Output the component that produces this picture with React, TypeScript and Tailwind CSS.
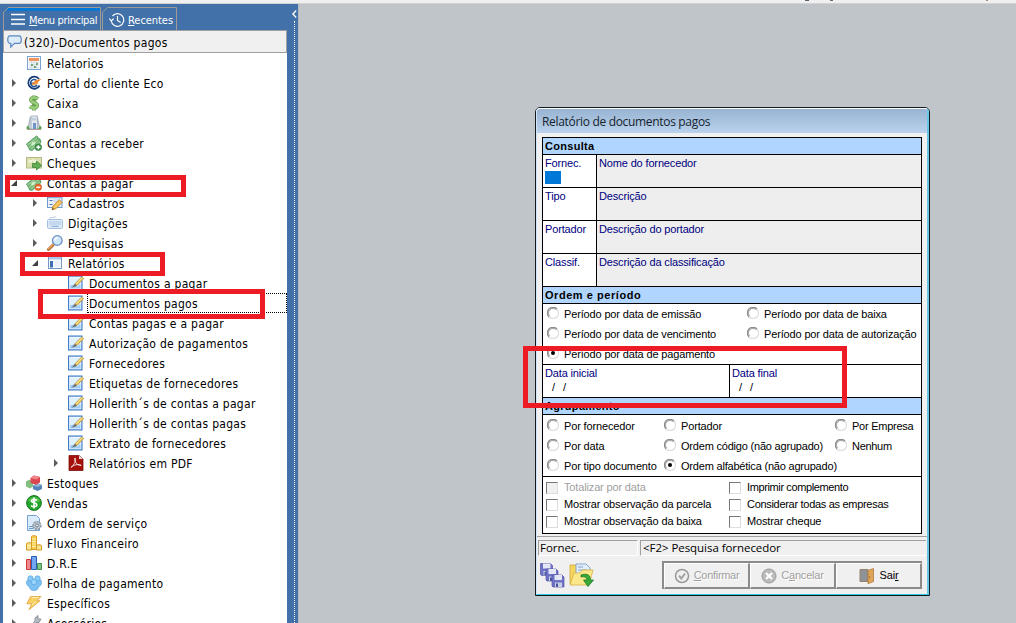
import type { ReactNode } from 'react';

const treeFont = "font-['DejaVu_Sans_Condensed','DejaVu_Sans',sans-serif] [font-stretch:condensed]";
const formFont = "font-['Liberation_Sans',sans-serif]";
const uiFont = "font-['Open_Sans',sans-serif]";

function Svg({ children, className = 'h-4 w-4' }: { children: ReactNode; className?: string }) {
  return (
    <svg viewBox="0 0 16 16" className={`shrink-0 ${className}`} fill="none">
      {children}
    </svg>
  );
}

const banknote = (
  <>
    <path d="M.5 9 10.5 1l1.5 1.2-.5 1.3L14 4l1 3.5L6 15.5l-2.5-.7-.8-2.2z" fill="#79b978" stroke="#3f8d4b" strokeWidth=".8" />
    <path d="M1.5 9.8 11 3M3 12.3l9-7M5 14l9-7" stroke="#b8e0b2" strokeWidth=".8" />
    <ellipse cx="7.3" cy="8.5" rx="2.4" ry="1.6" transform="rotate(-38 7.3 8.5)" fill="#d1edcb" />
  </>
);

const icons: Record<string, ReactNode> = {
  calendar: (
    <Svg>
      <rect x="1.5" y="1.5" width="13" height="13" fill="#f4f8fd" stroke="#7ba3cf" />
      <rect x="3" y="3" width="10" height="3" fill="#f0925c" />
      <path d="M3 7.5h10M3 10h10M3 12.5h10M5.5 6v8M8 6v8M10.5 6v8" stroke="#d3dbe3" />
      <path d="M5 9h2v2H5zM10 8h2v2h-2zM8 11h2v2H8z" fill="#6faa72" />
    </Svg>
  ),
  eco: (
    <Svg>
      <path d="M13 4A6 6 0 1 0 13.600 10.500" stroke="#173d78" strokeWidth="1.800" />
      <path d="M10.500 5.500A3.500 3.500 0 1 0 11 10M4.500 8.300h4" stroke="#245496" strokeWidth="1.500" />
      <path d="M5.500 9.300 9.500 5.500l6-1.800-3.800 3.800z" fill="#f4872a" />
      <path d="m6 9 4 .2 2-1.800" stroke="#f4872a" strokeWidth="1.300" />
    </Svg>
  ),
  cash: (
    <Svg>
      <path d="M12 3.8C9.5 2.2 5 2 5 5c0 3 6.2 2 6.2 5.3 0 3.2-5 3-7.4 1.2M8 .500v15" stroke="#6a9f52" strokeWidth="3.800" />
      <path d="M12 3.8C9.5 2.2 5 2 5 5c0 3 6.2 2 6.2 5.3 0 3.2-5 3-7.4 1.2M8 1v2M8 12v3" stroke="#98cd7a" strokeWidth="2.400" />
    </Svg>
  ),
  bank: (
    <Svg>
      <path d="M2 14 4 2.500h7.500L14 14z" fill="#cfd8e2" stroke="#96a2ae" strokeWidth=".8" />
      <rect x="5" y="1" width="6.500" height="13" fill="#e4e9ef" stroke="#a0a9b5" strokeWidth=".8" />
      <path d="M6 3h4.500v2.500H6z" fill="#c3cfde" />
      <path d="M7 8h3v6H7z" fill="#6e96c8" />
      <path d="M1 14.500h14" stroke="#b59c94" />
      <path d="M.500 14v-2L2 10.500 4 14M12 14l2-3.500 1.500 1.500v2" fill="#5da152" />
    </Svg>
  ),
  receive: (
    <Svg>
      {banknote}
      <circle cx="12.3" cy="12.3" r="3.3" fill="#3d9446" stroke="#2a7335" strokeWidth=".6" />
      <path d="M12.3 10.3v4M10.3 12.3h4" stroke="#fff" strokeWidth="1.4" />
    </Svg>
  ),
  pay: (
    <Svg>
      {banknote}
      <circle cx="12.3" cy="12.3" r="3.3" fill="#ee6a2c" stroke="#c94a16" strokeWidth=".6" />
      <path d="M10.3 12.3h4" stroke="#fff" strokeWidth="1.5" />
    </Svg>
  ),
  cheque: (
    <Svg>
      <rect x=".5" y="2.5" width="15" height="10.5" fill="#dcdfae" stroke="#b3b884" />
      <path d="M3 7.500c0-3 2-3 2 0 1-4 3-3 3-1s2-2 3-1" stroke="#fbfce8" strokeWidth="1.200" />
      <path d="M6.5 8.500h4V6L15.500 10.500l-5 4.500v-2.500h-4z" fill="#63ae52" stroke="#3f8439" strokeWidth=".8" />
    </Svg>
  ),
  form: (
    <Svg>
      <rect x=".5" y="1.5" width="14.5" height="11" fill="#e9f2fc" stroke="#6d99cd" />
      <path d="M1 2.5h14" stroke="#87b0df" strokeWidth="1.500" />
      <path d="M2.500 5.500h3M2.500 9.500h3" stroke="#4774ab" />
      <path d="M7 5h6v1.500H7z" fill="#fff" stroke="#9ab8d8" strokeWidth=".6" />
      <path d="m5 14.800 1-3.800 6.200-6.300 3 2.700-6.300 6.400z" fill="#f6c45b" stroke="#bd7c27" strokeWidth=".8" />
      <path d="m5 14.800.6-2 1.700 1.300z" fill="#674a2b" />
    </Svg>
  ),
  keyboard: (
    <Svg>
      <path d="M3 4V2.500h5V1" stroke="#c3cfdc" />
      <rect x=".5" y="4.500" width="15" height="9" rx="1" fill="#dbe9f8" stroke="#a5c0df" />
      <path d="M2.500 7h11M2.500 9h11" stroke="#84a6cf" strokeDasharray="1 1" />
      <path d="M4.500 11.300h7" stroke="#84a6cf" />
    </Svg>
  ),
  search: (
    <Svg>
      <path d="m1.500 14.500 5-5" stroke="#ad652e" strokeWidth="3" strokeLinecap="round" />
      <path d="m1.500 14 5-5" stroke="#ecaa65" strokeWidth="1.300" strokeLinecap="round" />
      <circle cx="10.300" cy="5.500" r="4.800" fill="#cfe6fb" stroke="#6a8fc3" strokeWidth="1.300" />
      <path d="M7.500 5.500a3 3 0 0 1 3-2.700" stroke="#fff" strokeWidth="1.500" />
    </Svg>
  ),
  report: (
    <Svg>
      <rect x="1.500" y="1.500" width="13" height="12" fill="#f6faff" stroke="#7897c2" />
      <path d="M2 2h12v2.500H2z" fill="#a9c9ee" />
      <path d="M3 6h3v6.500H3z" fill="#3d70b7" />
      <path d="M7.500 6h5.500v6H7.500z" fill="#eaf1fa" />
    </Svg>
  ),
  edit: (
    <Svg>
      <rect x=".6" y="1.100" width="13.300" height="13.800" fill="#fff" stroke="#3d7dcc" strokeWidth="1.200" />
      <path d="M2 2.500h10.500v11H2z" fill="#dff0fe" />
      <path d="M2 13.500v-3l3-1 4 2 3.500-2.500v4.500z" fill="#9fcdf4" />
      <path d="m5.500 11.800 2-3.800 6.500-6.200 1.800 1.700-6.300 6.500z" fill="#eac45b" stroke="#a98432" strokeWidth=".6" />
      <path d="m3.500 12.800 3.500-4 2 2z" fill="#697078" />
      <path d="m8 9 6.500-6.300" stroke="#fff0a9" strokeWidth=".8" />
    </Svg>
  ),
  pdf: (
    <Svg>
      <path d="M1 .5h10L15 4v11.500H1z" fill="#a4120b" stroke="#7b100c" strokeWidth=".8" />
      <path d="M11 .5V4h4z" fill="#e8dedc" />
      <path d="M3 12.500c2-1 5-6 4.500-9-.5-1.500-1.500 0-.5 2.500 1 3 4 4.800 6 4.500 1-.6-3-1.500-5-.7-1.500.3-3.600 1-5 2.700z" stroke="#fff" strokeWidth=".8" />
    </Svg>
  ),
  stock: (
    <Svg>
      <path d="m0 6.500 3-1.800 4 1.800v5L4 13.500l-4-2z" fill="#83bd80" />
      <path d="m7 10.500 4.500-2.300L16 10v4l-4.500 2L7 14z" fill="#5684ba" />
      <path d="m7 10.500 4.500 1.500L16 10l-4.500-1.800z" fill="#92b5dc" />
      <path d="M4.500 3 8 .5 14 2v5.500L10 9.800 4.500 8z" fill="#dc464e" />
      <path d="M4.500 3 8 .5 14 2l-3.700 2.500z" fill="#f0878a" />
    </Svg>
  ),
  sales: (
    <Svg>
      <circle cx="8" cy="8" r="7.400" fill="#25a52d" stroke="#15781c" />
      <path d="M2 6a6.500 6.500 0 0 1 12 0c-4 2-8 2-12 0z" fill="#66cc5a" opacity=".7" />
      <path d="M10.800 5.500C8.500 3.800 5.500 4.300 5.500 6c0 2.300 5.300 1.300 5.300 4 0 2-3.500 2.300-5.800.7M8 2.500v11" stroke="#fff" strokeWidth="1.600" />
    </Svg>
  ),
  service: (
    <Svg>
      <path d="M1.500.5h9l3 3v12h-12z" fill="#dcecfc" stroke="#74a0d2" />
      <path d="M3 11.500h4M3 13.500h4" stroke="#6999ce" />
      <circle cx="11" cy="10.500" r="3.900" fill="#bac4ce" stroke="#8d98a3" strokeWidth="1.500" strokeDasharray="2 .9" />
      <circle cx="11" cy="10.500" r="1.400" fill="#eff4f8" stroke="#76828f" />
    </Svg>
  ),
  flow: (
    <Svg>
      <path d="M5.500 1.500c0-1 5-1 5 0v13h-5z" fill="#f8cd54" stroke="#d39b22" />
      <path d="M.5 8.500c0-1 5-1 5 0V15h-5zM10.500 10.500c0-1 5-1 5 0V15h-5z" fill="#fadd83" stroke="#d39b22" />
      <path d="M6 4h4M6 6.500h4M6 9h4M6 11.500h4M1 10.500h4M1 12.700h4M11 12.700h4" stroke="#fff0ac" />
    </Svg>
  ),
  bars: (
    <Svg>
      <path d="M.5 4.500h4v10h-4z" fill="#f08a8a" stroke="#cc3838" />
      <path d="M5.500 1.500h5v13h-5z" fill="#75a5ef" stroke="#285fb8" />
      <path d="M11.500 8.500h4v6h-4z" fill="#80c886" stroke="#438e4c" />
    </Svg>
  ),
  people: (
    <Svg>
      <path d="M.500 7c0-2 2-2.500 3-2.500h9c1.500 0 3 .5 3 2.500 0 3-1.500 4.500-3 4.500 0 3-2 4-4.500 4s-4.500-1-4.500-4C2 11.500.500 10 .500 7z" fill="#7dc1f3" stroke="#58a5e0" strokeWidth=".7" />
      <circle cx="4.500" cy="3.500" r="2.700" fill="#8acbf7" stroke="#58a5e0" strokeWidth=".7" />
      <circle cx="11.500" cy="3.500" r="2.700" fill="#8acbf7" stroke="#58a5e0" strokeWidth=".7" />
      <circle cx="8" cy="7" r="2.800" fill="#98d4fb" stroke="#58a5e0" strokeWidth=".7" />
    </Svg>
  ),
  bolt: (
    <Svg>
      <path d="M4.500 1.500h10.500l-4 4.300h3L3 14.800l2.700-6H.8z" fill="#f8cf62" stroke="#dda23a" strokeWidth=".8" />
      <path d="M5.500 2.500h7M6 10l4-3.500" stroke="#fff0b7" />
    </Svg>
  ),
  tools: (
    <Svg>
      <path d="m2 14 7-8V3l3-2.500V4h3l-2 3.500h-3L4.500 15.500z" fill="#b7bec6" stroke="#7a838e" strokeWidth=".8" />
      <path d="M3 11v4" stroke="#86a8d8" strokeWidth="3" />
    </Svg>
  ),
};

type Item = { label: string; icon: string; level: 0 | 1 | 2; state?: 'closed' | 'open'; focused?: boolean };

const items: Item[] = [
  { label: 'Relatorios', icon: 'calendar', level: 0 },
  { label: 'Portal do cliente Eco', icon: 'eco', level: 0, state: 'closed' },
  { label: 'Caixa', icon: 'cash', level: 0, state: 'closed' },
  { label: 'Banco', icon: 'bank', level: 0, state: 'closed' },
  { label: 'Contas a receber', icon: 'receive', level: 0, state: 'closed' },
  { label: 'Cheques', icon: 'cheque', level: 0, state: 'closed' },
  { label: 'Contas a pagar', icon: 'pay', level: 0, state: 'open' },
  { label: 'Cadastros', icon: 'form', level: 1, state: 'closed' },
  { label: 'Digitações', icon: 'keyboard', level: 1, state: 'closed' },
  { label: 'Pesquisas', icon: 'search', level: 1, state: 'closed' },
  { label: 'Relatórios', icon: 'report', level: 1, state: 'open' },
  { label: 'Documentos a pagar', icon: 'edit', level: 2 },
  { label: 'Documentos pagos', icon: 'edit', level: 2, focused: true },
  { label: 'Contas pagas e a pagar', icon: 'edit', level: 2 },
  { label: 'Autorização de pagamentos', icon: 'edit', level: 2 },
  { label: 'Fornecedores', icon: 'edit', level: 2 },
  { label: 'Etiquetas de fornecedores', icon: 'edit', level: 2 },
  { label: 'Hollerith´s de contas a pagar', icon: 'edit', level: 2 },
  { label: 'Hollerith´s de contas pagas', icon: 'edit', level: 2 },
  { label: 'Extrato de fornecedores', icon: 'edit', level: 2 },
  { label: 'Relatórios em PDF', icon: 'pdf', level: 2, state: 'closed' },
  { label: 'Estoques', icon: 'stock', level: 0, state: 'closed' },
  { label: 'Vendas', icon: 'sales', level: 0, state: 'closed' },
  { label: 'Ordem de serviço', icon: 'service', level: 0, state: 'closed' },
  { label: 'Fluxo Financeiro', icon: 'flow', level: 0, state: 'closed' },
  { label: 'D.R.E', icon: 'bars', level: 0, state: 'closed' },
  { label: 'Folha de pagamento', icon: 'people', level: 0, state: 'closed' },
  { label: 'Específicos', icon: 'bolt', level: 0, state: 'closed' },
  { label: 'Acessórios', icon: 'tools', level: 0, state: 'closed' },
];

const indent = ['pl-[8px]', 'pl-[29px]', 'pl-[50px]'];

function TreeRow({ item }: { item: Item }) {
  return (
    <div className={`flex h-5 shrink-0 items-center ${indent[item.level]}`}>
      <svg viewBox="0 0 8 10" className="mr-[7px] h-[10px] w-2 shrink-0">
        {item.state === 'closed' && <path d="M1 1v8l4-4z" fill="#5c5c5c" />}
        {item.state === 'open' && <path d="M6 2v6H0z" fill="#404040" />}
      </svg>
      {icons[item.icon]}
      <div
        className={`ml-[3px] flex h-5 items-center whitespace-nowrap border border-dotted pl-px pt-[2px] ${
          item.focused ? 'flex-1 border-black' : 'border-transparent'
        }`}
      >
        {item.label}
      </div>
    </div>
  );
}

function TabFrame({ width, active }: { width: number; active?: boolean }) {
  return (
    <svg className="absolute inset-0 h-full w-full" viewBox={`0 0 ${width} 24`} preserveAspectRatio="none">
      {active && <path d={`M5 1h${width - 6}v3H2z`} fill="#0078d7" />}
      <path d={`M.5 24V5.500L5.500.5H${width - 0.5}V24`} fill="none" stroke="#a39c94" />
    </svg>
  );
}

function Sidebar() {
  return (
    <aside className={`flex w-[299px] shrink-0 border-r border-[#b5bac0] bg-[#4270a8] text-xs tracking-[0.3px] text-black ${treeFont}`}>
      <div className="flex w-[287px] flex-col overflow-hidden pl-[3px] pt-[3px]">
        <div className="flex h-[23px] shrink-0 gap-px text-[11px] text-white">
          <div className="relative flex w-[98px] items-center gap-[4px] pl-[8px] pt-1">
            <TabFrame width={98} active />
            <svg viewBox="0 0 14 12" className="mb-[3px] h-3 w-[14px] shrink-0">
              <path d="M0 1.500h14M0 6.500h14M0 11h14" stroke="#fff" strokeWidth="1.500" />
            </svg>
            <span className="whitespace-nowrap pt-[2px] tracking-[-0.35px]"><u>M</u>enu principal</span>
          </div>
          <div className="relative flex w-[75px] items-center gap-[3px] pl-[7px] pt-1">
            <TabFrame width={75} />
            <svg viewBox="0 0 16 16" className="mb-[2px] h-4 w-4 shrink-0" fill="none" stroke="#fff" strokeWidth="1.200">
              <path d="M2.200 9A6.300 6.300 0 1 0 3.500 4M.3 6.500l2 2.500 2.200-2.300M8.500 4v4.500l3.200 2" />
            </svg>
            <span className="whitespace-nowrap pt-[2px] tracking-[-0.05px]"><u>R</u>ecentes</span>
          </div>
        </div>
        <div className="flex h-[23px] shrink-0 items-center border border-[#a0a0a0] bg-[#f0f0f0] pl-[3px]">
          <svg viewBox="0 0 16 14" className="mr-[2px] h-[13px] w-[15px]">
            <path d="M3 1h10c3 0 3 8 0 8H8l-4 4V9H3C0 9 0 1 3 1z" fill="#dcebfa" stroke="#5a87be" strokeWidth="1.300" />
          </svg>
          <span className="pt-[2px]">(320)-Documentos pagos</span>
        </div>
        <div className="flex min-h-0 flex-1 flex-col overflow-hidden bg-white">
          {items.map((item) => (
            <TreeRow key={item.label} item={item} />
          ))}
        </div>
      </div>
      <div className="flex w-[11px] flex-col items-center pl-[3px] pt-[6px]">
        <svg viewBox="0 0 5 8" className="mb-[3px] h-2 w-[5px]">
          <path d="M4.200.5.900 4l3.300 3.500" fill="none" stroke="#fff" strokeWidth="1.300" />
        </svg>
        <div className="flex-1 border-l border-dotted border-white" />
      </div>
    </aside>
  );
}

function SectionTitle({ children, tracking = 'tracking-[0.3px]' }: { children: ReactNode; tracking?: string }) {
  return (
    <div className={`flex h-[17px] items-center border-b border-black bg-[#b0d6ff] pl-[2px] font-bold ${tracking}`}>
      {children}
    </div>
  );
}

function Field({ label, description, selected }: { label: string; description: string; selected?: boolean }) {
  return (
    <div className="flex h-[33px] border-b border-black leading-[14px] text-[#000080]">
      <div className="w-[54px] border-r border-black pl-[2px] pt-px">
        {label}
        {selected && <div className="mt-px h-[13px] w-4 bg-[#0078d7]" />}
      </div>
      <div className="flex-1 bg-[#eee] pl-[2px] pt-px">{description}</div>
    </div>
  );
}

function Radio({ label, checked, tracking = '' }: { label: string; checked?: boolean; tracking?: string }) {
  return (
    <label className="flex h-5 items-center gap-[5px] whitespace-nowrap">
      <svg viewBox="0 0 12 12" className="mb-[2px] h-3 w-3 shrink-0" fill="none">
        <path d="M2 10A5.300 5.300 0 0 1 10 2" stroke="#8c8c8c" strokeWidth="1.200" />
        <path d="M2.800 9.200A4.300 4.300 0 0 1 9.200 2.800" stroke="#666" strokeWidth=".6" />
        <path d="M10 2A5.300 5.300 0 0 1 2 10" stroke="#dedede" strokeWidth="1.200" />
        {checked && <circle cx="6" cy="6" r="2" fill="#000" />}
      </svg>
      <span className={tracking}>{label}</span>
    </label>
  );
}

function Check({ label, disabled, tracking = '' }: { label: string; disabled?: boolean; tracking?: string }) {
  return (
    <label className={`flex h-[17px] items-center gap-[6px] whitespace-nowrap ${disabled ? 'text-[#a0a0a0]' : ''}`}>
      <span
        className={`h-3 w-3 shrink-0 border-b border-l-[1.500px] border-r border-t-[1.500px] border-b-[#ddd] border-l-[#777] border-r-[#ddd] border-t-[#777] ${
          disabled ? 'bg-[#f0f0f0]' : 'bg-white'
        }`}
      />
      <span className={tracking}>{label}</span>
    </label>
  );
}

function DateField({ label, width }: { label: string; width: string }) {
  return (
    <div className={`${width} pl-[2px] pt-px leading-[14px]`}>
      <div className="text-[#000080]">{label}</div>
      <div className="flex gap-[8px] pl-[7px]">
        <span>/</span>
        <span>/</span>
      </div>
    </div>
  );
}

function DialogButton({ children, disabled, width }: { children: ReactNode; disabled?: boolean; width: string }) {
  return (
    <button
      className={`flex h-[26px] shrink-0 items-center justify-center border-b-2 border-l border-r-2 border-t border-b-[#8b8b8b] border-l-white border-r-[#8b8b8b] border-t-white bg-[#f0f0f0] ${width} ${
        disabled ? 'gap-[4px] text-[#a0a0a0] [text-shadow:1px_1px_0_white]' : 'gap-[5px]'
      }`}
    >
      {children}
    </button>
  );
}

function Floppy({ x, y }: { x: number; y: number }) {
  return (
    <g transform={`translate(${x} ${y})`}>
      <path d="M0 0h10l2 2v10H1l-1-1z" fill="#6f72c6" stroke="#5457a8" strokeWidth=".7" />
      <path d="M2.500 0H10v5H2.500z" fill="#e4e8f6" />
      <path d="M3 7.500h7V12H3z" fill="#c7d0e2" />
      <path d="M4 8.500h2V12H4z" fill="#4b50a0" />
    </g>
  );
}

function Dialog() {
  return (
    <section
      className={`absolute left-[535px] top-[107px] flex h-[489px] w-[395px] flex-col rounded-t-[5px] border border-[#111b24] bg-[#f0f0f0] text-[11px] tracking-[-0.15px] text-black ${formFont}`}
    >
      <div className="flex min-h-0 flex-1 flex-col overflow-hidden rounded-t-[4px] border-b border-l border-r-2 border-t border-b-[#2cc8dc] border-l-[#cfe6fa] border-r-[#6bc7e6] border-t-white">
        <h1
          className={`flex h-6 shrink-0 items-center bg-linear-to-b from-[#98b4d2] to-[#bad2ec] pl-[5px] pt-px text-xs tracking-[-0.32px] text-[#151f2d] ${uiFont}`}
        >
          Relatório de documentos pagos
        </h1>
        <div className="ml-[5px] mt-1 h-[397px] w-[380px] shrink-0 border border-black bg-white">
          <SectionTitle>Consulta</SectionTitle>
          <Field label="Fornec." description="Nome do fornecedor" selected />
          <Field label="Tipo" description="Descrição" />
          <Field label="Portador" description="Descrição do portador" />
          <Field label="Classif." description="Descrição da classificação" />
          <SectionTitle tracking="tracking-[0.55px]">Ordem e período</SectionTitle>
          <div className="flex h-[61px] border-b border-black pl-1">
            <div className="w-[200px]">
              <Radio label="Período por data de emissão" />
              <Radio label="Período por data de vencimento" />
              <Radio label="Período por data de pagamento" checked />
            </div>
            <div>
              <Radio label="Período por data de baixa" />
              <Radio label="Período por data de autorização" />
            </div>
          </div>
          <div className="flex h-[33px] border-b border-black">
            <DateField label="Data inicial" width="w-[187px] border-r border-black" />
            <DateField label="Data final" width="flex-1" />
          </div>
          <SectionTitle>Agrupamento</SectionTitle>
          <div className="flex h-[62px] border-b border-black pl-1 pt-px">
            <div className="w-[117px]">
              <Radio label="Por fornecedor" />
              <Radio label="Por data" />
              <Radio label="Por tipo documento" />
            </div>
            <div className="w-[171px]">
              <Radio label="Portador" />
              <Radio label="Ordem código (não agrupado)" tracking="tracking-[-0.2px]" />
              <Radio label="Ordem alfabética (não agrupado)" checked tracking="tracking-[-0.2px]" />
            </div>
            <div>
              <Radio label="Por Empresa" tracking="tracking-[-0.25px]" />
              <Radio label="Nenhum" tracking="tracking-[-0.3px]" />
            </div>
          </div>
          <div className="flex pl-[3px] pt-[2px]">
            <div className="w-[183px]">
              <Check label="Totalizar por data" disabled />
              <Check label="Mostrar observação da parcela" />
              <Check label="Mostrar observação da baixa" />
            </div>
            <div>
              <Check label="Imprimir complemento" tracking="tracking-[-0.38px]" />
              <Check label="Considerar todas as empresas" tracking="tracking-[-0.3px]" />
              <Check label="Mostrar cheque" />
            </div>
          </div>
        </div>
        <div className="mt-[2px] h-px shrink-0 bg-[#a0a0a0]" />
        <div className={`mt-[3px] flex h-[16px] shrink-0 gap-[2px] pl-px pr-px text-[11.500px] leading-[14px] tracking-[-0.05px] ${uiFont}`}>
          <div className="w-[100px] border-b border-l border-r border-t border-b-white border-l-[#a0a0a0] border-r-white border-t-[#a0a0a0] pl-px">
            Fornec.
          </div>
          <div className="flex-1 border-b border-l border-t border-b-white border-l-[#a0a0a0] border-t-[#a0a0a0] pl-[2px]">
            &lt;F2&gt; Pesquisa fornecedor
          </div>
        </div>
        <div className="mt-[5px] flex pl-[3px]">
          <svg viewBox="0 0 25 25" className="mt-[2px] h-[25px] w-[25px]">
            <Floppy x={0.5} y={0.5} />
            <Floppy x={6} y={6} />
            <Floppy x={12} y={12} />
          </svg>
          <svg viewBox="0 0 25 25" className="ml-[4px] mt-px h-[25px] w-[25px]">
            <path d="M1 3h6l2 3h3v16H1z" fill="#f6d55e" stroke="#cda63c" strokeWidth=".8" />
            <path d="M7 2h10l4 4v12H7z" fill="#e4effb" stroke="#6d96c6" strokeWidth=".8" />
            <path d="M9 5h5M9 8h9" stroke="#7a9fca" />
            <path d="m1 23 4-12h6l2-3h11l-4 15z" fill="#fce88b" stroke="#d6b246" strokeWidth=".8" />
            <path d="M12 13c6-2 9.500 0 9.500 5h3L19 24.500 14.500 18h3.500c0-2-2-4-6-3z" fill="#36a936" stroke="#1d7724" strokeWidth=".8" />
          </svg>
          <div className="ml-[68px] flex h-[28px] w-[260px] border-l-2 border-t-2 border-[#8b8b8b]">
            <DialogButton disabled width="w-[86px]">
              <svg viewBox="0 0 16 16" className="h-4 w-4" fill="none">
                <circle cx="8" cy="8" r="6.500" stroke="#999" strokeWidth="1.500" />
                <path d="m5 7.700 2.300 2.800L11 5.500" stroke="#a2a2a2" strokeWidth="2" />
              </svg>
              <span className="tracking-[-0.3px]"><u>C</u>onfirmar</span>
            </DialogButton>
            <DialogButton disabled width="w-[86px]">
              <svg viewBox="0 0 16 16" className="h-4 w-4" fill="none">
                <circle cx="8" cy="8" r="7" fill="#bbb" stroke="#999" />
                <path d="m5 5 6 6m0-6-6 6" stroke="#fff" strokeWidth="2.300" />
              </svg>
              <span className="tracking-[-0.2px]">C<u>a</u>ncelar</span>
            </DialogButton>
            <DialogButton width="w-[86px]">
              <svg viewBox="0 0 16 16" className="h-4 w-4">
                <path d="M1 1.500h8v12H1z" fill="#8d9298" stroke="#9a8068" />
                <path d="m9 2.500 5.500-2v13L9 15.700z" fill="#dfa65a" stroke="#b27838" strokeWidth=".8" />
                <path d="M10.500 8.500v1" stroke="#6c431c" />
              </svg>
              <span>Sai<u>r</u></span>
            </DialogButton>
          </div>
        </div>
      </div>
    </section>
  );
}

export default function App() {
  return (
    <div className="relative flex h-[623px] w-[1016px] flex-col overflow-hidden bg-[#c0c5c9]">
      <header className="flex h-1 shrink-0 border-b border-[#d0d2d4] bg-[#f0f0f0] pl-[805px]">
        <i className="h-px w-1 bg-[#5d6070]" />
        <i className="ml-[21px] h-px w-[3px] bg-[#746a60]" />
        <i className="ml-[153px] h-px w-[2px] bg-[#a08b78]" />
      </header>
      <main className="flex min-h-0 flex-1">
        <Sidebar />
      </main>
      <Dialog />
      <div className="absolute left-[5px] top-[175px] h-[22px] w-[181px] border-[5px] border-[#ed1c24]" />
      <div className="absolute left-[20px] top-[252px] h-[24px] w-[145px] border-[5px] border-[#ed1c24]" />
      <div className="absolute left-[38px] top-[289px] h-[30px] w-[227px] border-[5px] border-[#ed1c24]" />
      <div className="absolute left-[523px] top-[346px] h-[62px] w-[324px] border-[5px] border-[#ed1c24]" />
    </div>
  );
}
